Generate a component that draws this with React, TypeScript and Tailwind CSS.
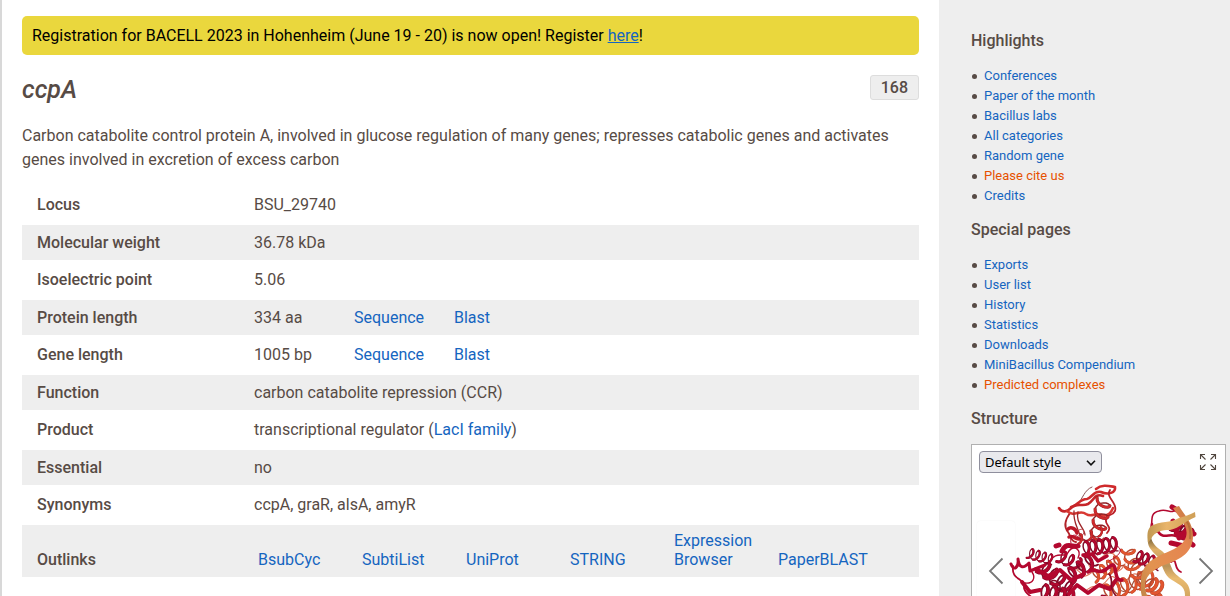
import type { ReactNode } from "react";

type NavItem = { label: string; accent?: boolean };

const highlights: NavItem[] = [
  { label: "Conferences" },
  { label: "Paper of the month" },
  { label: "Bacillus labs" },
  { label: "All categories" },
  { label: "Random gene" },
  { label: "Please cite us", accent: true },
  { label: "Credits" },
];

const specialPages: NavItem[] = [
  { label: "Exports" },
  { label: "User list" },
  { label: "History" },
  { label: "Statistics" },
  { label: "Downloads" },
  { label: "MiniBacillus Compendium" },
  { label: "Predicted complexes", accent: true },
];

const outlinks = ["BsubCyc", "SubtiList", "UniProt", "STRING", "Expression Browser", "PaperBLAST"];

function Link({ children }: { children: ReactNode }) {
  return (
    <a href="#" className="text-[#1565c0] hover:underline">
      {children}
    </a>
  );
}

function LengthValue({ value }: { value: string }) {
  return (
    <div className="flex">
      <span className="w-[100px]">{value}</span>
      <span className="w-[100px]">
        <Link>Sequence</Link>
      </span>
      <Link>Blast</Link>
    </div>
  );
}

const rows: { label: string; value: ReactNode }[] = [
  { label: "Locus", value: "BSU_29740" },
  { label: "Molecular weight", value: "36.78 kDa" },
  { label: "Isoelectric point", value: "5.06" },
  { label: "Protein length", value: <LengthValue value="334 aa" /> },
  { label: "Gene length", value: <LengthValue value="1005 bp" /> },
  { label: "Function", value: "carbon catabolite repression (CCR)" },
  {
    label: "Product",
    value: (
      <>
        transcriptional regulator (<Link>LacI family</Link>)
      </>
    ),
  },
  { label: "Essential", value: "no" },
  { label: "Synonyms", value: "ccpA, graR, alsA, amyR" },
];

function GeneTable() {
  return (
    <table className="mt-[13px] w-full border-collapse text-left leading-[19px]">
      <tbody>
        {rows.map((row, i) => (
          <tr key={row.label} className={i % 2 ? "h-[35px] bg-[#eeeeee]" : "h-[40px]"}>
            <th scope="row" className="w-[232px] p-0 pb-px pl-[15px] font-medium">
              {row.label}
            </th>
            <td className="p-0 pb-px">{row.value}</td>
          </tr>
        ))}
        <tr className="bg-[#eeeeee] align-bottom">
          <th scope="row" className="w-[232px] pt-[6px] pb-2 pl-[15px] font-medium">
            Outlinks
          </th>
          <td className="pt-[6px] pb-2 pl-1">
            <ul className="flex items-end">
              {outlinks.map((name) => (
                <li key={name} className="w-[104px] pr-4">
                  <Link>{name}</Link>
                </li>
              ))}
            </ul>
          </td>
        </tr>
      </tbody>
    </table>
  );
}

function NavSection({ title, items }: { title: string; items: NavItem[] }) {
  return (
    <nav aria-label={title} className="mb-[14px]">
      <h2 className="mb-[15px] leading-5 font-medium">{title}</h2>
      <ul className="text-[13px] leading-5">
        {items.map((item) => (
          <li
            key={item.label}
            className="flex items-center before:mr-[7px] before:ml-px before:size-[5px] before:rounded-full before:bg-[#574b45]"
          >
            <a href="#" className={item.accent ? "text-[#e65100] hover:underline" : "text-[#1565c0] hover:underline"}>
              {item.label}
            </a>
          </li>
        ))}
      </ul>
    </nav>
  );
}

type HelixProps = {
  from: [number, number];
  to: [number, number];
  turns: number;
  r: number;
  color: string;
  dark: string;
  width?: number;
};

// A coil along a line: wide strokes on the near side, thin ones on the far side.
function Helix({ from, to, turns, r, color, dark, width = 4 }: HelixProps) {
  const dx = to[0] - from[0];
  const dy = to[1] - from[1];
  const len = Math.hypot(dx, dy);
  const ux = dx / len;
  const uy = dy / len;
  const half = (k: number) => {
    const pts: string[] = [];
    for (let s = 0; s <= 8; s++) {
      const a = Math.PI * (k + s / 8);
      const along = (len * a) / (2 * Math.PI * turns) + r * 0.65 * Math.sin(a);
      const across = r * Math.cos(a);
      const x = from[0] + ux * along - uy * across;
      const y = from[1] + uy * along + ux * across;
      pts.push(`${x.toFixed(1)} ${y.toFixed(1)}`);
    }
    return "M" + pts.join("L");
  };
  const halves = Array.from({ length: Math.round(turns * 2) }, (_, k) => k);
  return (
    <g fill="none" strokeLinecap="round" strokeLinejoin="round">
      {halves.filter((k) => k % 2 === 1).map((k) => (
        <path key={k} d={half(k)} stroke={dark} strokeWidth={width * 0.36} />
      ))}
      {halves.filter((k) => k % 2 === 0).map((k) => (
        <g key={k}>
          <path d={half(k)} stroke={dark} strokeWidth={width * 0.76} />
          <path d={half(k)} stroke={color} strokeWidth={width * 0.58} />
        </g>
      ))}
    </g>
  );
}

const crimson = { color: "#b3082f", dark: "#7d0a27" };
const red = { color: "#cf2a2c", dark: "#8f2023" };
const orange = { color: "#e2552f", dark: "#b5482f" };

function Protein() {
  return (
    <svg viewBox="972 445 253 253" className="block w-full" role="img" aria-label="Protein structure">
      <defs>
        <linearGradient id="dnaA" x1="0" y1="1" x2="1" y2="0">
          <stop offset="0" stopColor="#b98145" />
          <stop offset="0.3" stopColor="#e29350" />
          <stop offset="0.75" stopColor="#e58550" />
          <stop offset="1" stopColor="#b9763c" />
        </linearGradient>
        <linearGradient id="dnaB" x1="0" y1="0" x2="1" y2="0">
          <stop offset="0" stopColor="#c09750" />
          <stop offset="0.4" stopColor="#e9b56b" />
          <stop offset="1" stopColor="#cf9f57" />
        </linearGradient>
        <linearGradient id="dnaC" x1="0" y1="0" x2="0" y2="1">
          <stop offset="0" stopColor="#6d5a33" />
          <stop offset="0.15" stopColor="#e0b067" />
          <stop offset="0.35" stopColor="#b9935a" />
          <stop offset="0.5" stopColor="#eabb70" />
          <stop offset="1" stopColor="#b58d4d" />
        </linearGradient>
      </defs>

      <g fill="none" strokeLinecap="round" strokeLinejoin="round">
        {/* upper domain */}
        <path d="M1092 487C1084 490 1083 499 1078 503" stroke="#8a5557" strokeWidth="1" />
        <path d="M1096 489C1102 484 1109 486 1115 487C1116 493 1108 495 1101 492C1094 490 1092 498 1087 499C1079 499 1078 506 1071 507" stroke="#cf2a2c" strokeWidth="2.6" />
        <path d="M1059 508C1062 513 1067 512 1071 508C1077 502 1082 507 1088 504C1095 500 1094 493 1103 496" stroke="#c62529" strokeWidth="2.6" />
        <path d="M1070 513C1065 520 1063 526 1068 532C1071 536 1070 541 1076 542" stroke="#b12429" strokeWidth="1.8" />
        <path d="M1067 511C1075 518 1079 509 1086 514C1092 518 1095 512 1101 515C1107 517 1111 513 1113 508" stroke="#d83832" strokeWidth="2.6" />
        <path d="M1074 511C1073 523 1078 527 1080 536M1078 512C1075 523 1085 528 1085 535" stroke="#9d2528" strokeWidth="1.3" />
        <path d="M1110 490C1105 498 1118 502 1115 511C1112 517 1107 513 1106 520C1105 526 1113 526 1107 533" stroke="#ba2028" strokeWidth="1.8" />
        <path d="M1068 529C1071 526 1076 529 1077 533M1069 537C1074 535 1076 540 1080 539" stroke="#bb1727" strokeWidth="3.5" />
        <path d="M1079 530C1086 526 1085 538 1079 535C1078 541 1086 542 1091 540" stroke="#bc4144" strokeWidth="1" />
      </g>
      <Helix from={[1104, 499]} to={[1097, 538]} turns={3.5} r={7} {...red} width={4} />
      <Helix from={[1077, 540]} to={[1102, 531]} turns={2.5} r={4} {...red} width={3} />

      {/* central pale and orange chains */}
      <g fill="none" stroke="#e07a60" strokeWidth="1.2" strokeLinecap="round">
        <path d="M1082 566C1078 557 1084 568 1077 570C1084 574 1081 580 1091 573C1096 569 1084 565 1091 562M1101 558C1110 550 1118 552 1114 563C1109 573 1119 575 1125 564" />
        <path d="M1085 592C1094 581 1099 592 1108 579C1115 570 1120 589 1129 578C1136 568 1140 580 1147 575" />
        <path d="M1110 570C1126 577 1110 590 1126 592C1135 589 1130 575 1142 580" stroke="#9f5340" />
      </g>
      <Helix from={[1093, 577]} to={[1121, 560]} turns={4} r={6} {...orange} width={4} />
      <Helix from={[1127, 548]} to={[1134, 566]} turns={2} r={6} {...orange} width={4} />
      <Helix from={[1104, 594]} to={[1150, 577]} turns={5.5} r={8} {...orange} width={4} />
      <Helix from={[1131, 563]} to={[1150, 588]} turns={3} r={7} {...orange} width={4} />
      <Helix from={[1117, 615]} to={[1164, 601]} turns={5} r={9} {...orange} width={5} />
      <Helix from={[1150, 584]} to={[1158, 588]} turns={1.5} r={7} {...orange} width={5} />

      {/* left crimson domain */}
      <Helix from={[1028, 553]} to={[1053, 560]} turns={4} r={5} {...crimson} width={3} />
      <Helix from={[1083, 549]} to={[1117, 544]} turns={5} r={7} {...crimson} />
      <Helix from={[1041, 566]} to={[1071, 590]} turns={4} r={7} {...crimson} width={5} />
      <Helix from={[1059, 556]} to={[1078, 564]} turns={2.5} r={6} {...crimson} />
      <Helix from={[1069, 577]} to={[1094, 559]} turns={3} r={7} {...crimson} width={5} />
      <Helix from={[1040, 592]} to={[1074, 599]} turns={4} r={8} {...crimson} width={5} />
      <g fill="none" stroke="#b3082f" strokeLinecap="round" strokeLinejoin="round">
        <path d="M1011 564C1014 572 1019 567 1018 559C1019 568 1023 569 1029 563L1030 571L1045 565" strokeWidth="3" />
        <path d="M1013 566C1011 581 1025 577 1024 588C1026 597 1035 594 1029 601" strokeWidth="1.8" />
        <path d="M1022 582L1030 592L1040 590M1036 569L1048 576L1060 570L1071 580L1084 574" strokeWidth="4" />
        <path d="M1032 572C1036 578 1033 584 1025 583M1049 562C1057 549 1065 560 1069 551C1074 544 1082 550 1078 558" strokeWidth="1.4" />
        <path d="M1056 546L1059 545M1062 551C1067 541 1073 548 1078 546" strokeWidth="5" />
        <path d="M1083 555L1092 554L1098 561L1107 556M1088 572C1095 566 1099 577 1109 567C1119 558 1112 582 1122 580" strokeWidth="3.5" />
        <path d="M1069 594L1077 585L1088 593L1099 585L1110 589L1116 580" strokeWidth="4" />
        <path d="M1071 543C1069 535 1075 532 1080 539M1117 546C1126 551 1115 558 1109 561" strokeWidth="1" />
        <path d="M1050 584C1050 578 1061 580 1060 588M1109 574C1115 580 1107 586 1116 596" stroke="#850b28" strokeWidth="1.6" />
      </g>
      <Helix from={[1073, 616]} to={[1110, 604]} turns={4} r={9} {...crimson} width={6} />

      {/* DNA-binding domain */}
      <Helix from={[1136, 556]} to={[1160, 565]} turns={4} r={6} {...crimson} />
      <Helix from={[1174, 524]} to={[1191, 537]} turns={3} r={6} {...crimson} width={6} />
      <g fill="none" stroke="#b3082f" strokeLinecap="round" strokeLinejoin="round">
        <path d="M1151 532C1153 521 1149 513 1159 511C1167 508 1172 515 1176 509" strokeWidth="1.6" />
        <path d="M1152 524L1151 533L1158 531C1162 540 1170 533 1176 536" strokeWidth="2.6" />
        <path d="M1172 507L1177 510M1173 521L1179 538L1190 531M1171 543L1184 546M1192 533L1194 534M1189 542L1193 545" strokeWidth="5" />
        <path d="M1160 559C1169 550 1176 555 1184 548M1171 562C1178 557 1173 569 1181 572" strokeWidth="1.8" />
      </g>

      {/* DNA strands */}
      <path
        d="M1148 540C1147 547 1153 552 1158 557C1163 566 1163 572 1169 578C1177 584 1185 585 1185 595C1184 606 1175 611 1168 616L1173 620C1182 614 1192 607 1190 595C1191 580 1178 579 1173 571C1170 564 1168 556 1162 551C1156 547 1152 543 1151 537Z"
        fill="url(#dnaC)"
      />
      <path
        d="M1173 508L1179 506C1184 515 1193 522 1193 536C1193 552 1181 559 1167 564C1156 568 1146 574 1145 584C1145 594 1148 600 1157 603L1155 608C1143 605 1140 596 1141 584C1140 570 1147 562 1157 557C1168 551 1182 548 1186 537C1189 526 1180 519 1173 508Z"
        fill="url(#dnaA)"
      />
      <path d="M1186 520C1190 526 1191 532 1190 539" fill="none" stroke="#a4642f" strokeWidth="2" opacity=".6" />
      <path
        d="M1195 512L1195.500 517C1185 521 1180 528 1170 530C1162 530 1155 531 1151 539L1148 543C1147 535 1147 530 1151 526C1160 521 1171 523 1179 518C1185 516 1189 515 1195 512Z"
        fill="url(#dnaB)"
      />
    </svg>
  );
}

function StructureViewer() {
  return (
    <section aria-labelledby="structure-title">
      <h2 id="structure-title" className="mb-[15px] leading-5 font-medium">
        Structure
      </h2>
      <div className="relative border border-[#b0b0b0] bg-white">
        <Protein />
        <select
          aria-label="Display style"
          className="absolute top-[6px] left-[7px] h-[22px] w-[123px] appearance-none rounded border border-[#8f8f9d] bg-[#e9e9ed] pl-[5px] font-['Noto_Sans',sans-serif] text-[13px] leading-5 text-black"
        >
          <option>Default style</option>
        </select>
        <svg viewBox="0 0 10 6" className="pointer-events-none absolute top-[15px] left-[114px] h-[6px] w-[10px]" fill="none" stroke="#111" strokeWidth="1.6">
          <path d="M1 .8L5 4.8L9 .8" />
        </svg>
        <button type="button" aria-label="Full screen" className="absolute top-[8px] right-[8px] cursor-pointer">
          <svg viewBox="0 0 18 18" className="size-[18px]" fill="none" stroke="#51473f" strokeWidth="1.1">
            <path d="M1.5 6V1.5H6M1.5 1.5L6.5 6.5M12 1.5H16.5V6M16.5 1.5L11.5 6.5M1.5 12V16.5H6M1.5 16.5L6.5 11.5M12 16.5H16.5V12M16.5 16.5L11.5 11.5" />
          </svg>
        </button>
        <button
          type="button"
          aria-label="Previous structure"
          className="absolute top-[76px] left-[5px] flex h-[100px] w-[38px] cursor-pointer items-center justify-center rounded-sm shadow-[0_0_2px_rgba(0,0,0,0.06)]"
        >
          <svg viewBox="0 0 16 28" className="h-[28px] w-[16px]" fill="none" stroke="#777" strokeWidth="1.8">
            <path d="M14.500 1.500L2 14L14.500 26.500" />
          </svg>
        </button>
        <button
          type="button"
          aria-label="Next structure"
          className="absolute top-[76px] right-0 flex h-[100px] w-[38px] cursor-pointer items-center justify-center rounded-sm"
        >
          <svg viewBox="0 0 16 28" className="h-[28px] w-[16px]" fill="none" stroke="#777" strokeWidth="1.8">
            <path d="M1.500 1.500L14 14L1.500 26.500" />
          </svg>
        </button>
      </div>
    </section>
  );
}

export default function App() {
  return (
    <div className="flex h-screen overflow-hidden border-l-2 border-[#d8d8d8] bg-white font-[Roboto,sans-serif] text-base text-[#574b45]">
      <main className="min-w-0 flex-1 px-5 pt-4">
        <div role="status" className="rounded-[5px] bg-[#ead73d] p-[10px] leading-[19px] text-black">
          Registration for BACELL 2023 in Hohenheim (June 19 - 20) is now open! Register{" "}
          <a href="#" className="text-[#1565c0] underline">
            here
          </a>
          !
        </div>
        <header className="mt-5 flex items-start justify-between">
          <h1 className="text-[25px] leading-[30px] font-medium italic">ccpA</h1>
          <span className="rounded-[3px] border border-[#dddddd] bg-[#eeeeee] px-[10px] leading-[23px] font-medium">168</span>
        </header>
        <p className="mt-[19px] leading-6">
          Carbon catabolite control protein A, involved in glucose regulation of many genes; represses catabolic genes and
          activates genes involved in excretion of excess carbon
        </p>
        <GeneTable />
      </main>
      <aside className="w-[291px] shrink-0 bg-[#eeeeee] pt-[31px] pr-1 pl-8">
        <NavSection title="Highlights" items={highlights} />
        <NavSection title="Special pages" items={specialPages} />
        <StructureViewer />
      </aside>
    </div>
  );
}
